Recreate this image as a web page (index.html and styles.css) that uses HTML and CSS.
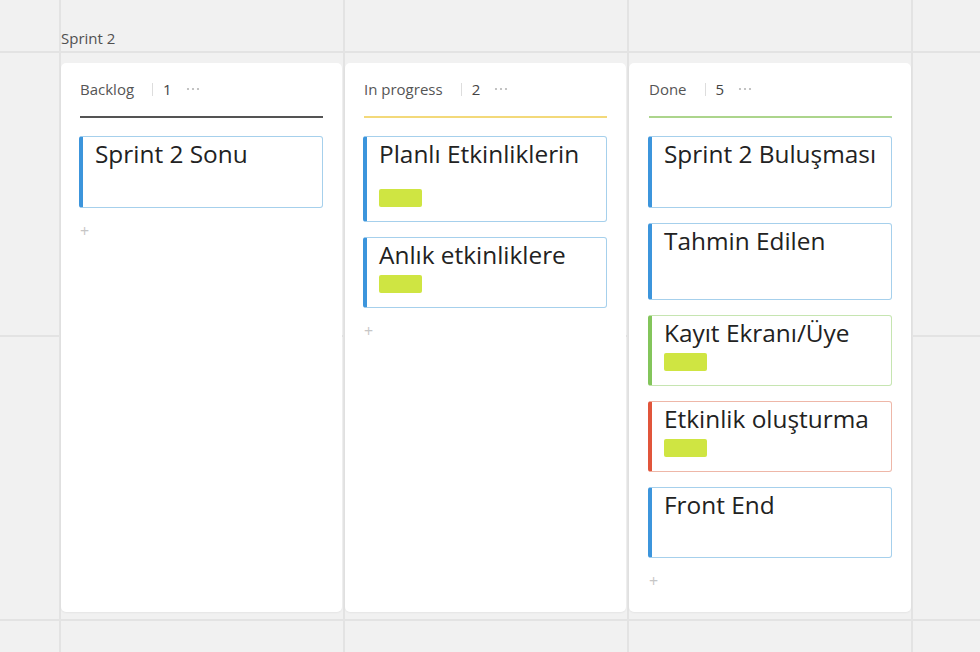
FILE: index.html
```html
<!DOCTYPE html>
<html lang="tr">
<head>
<meta charset="utf-8">
<title>Sprint 2</title>
<link rel="stylesheet" href="styles.css">
</head>
<body>
<div class="board">
  <div class="board-title">Sprint 2</div>
  <div class="columns">
    <section class="column">
      <header class="col-head">
        <span class="col-name">Backlog</span>
        <span class="col-sep"></span>
        <span class="col-count">1</span>
        <svg class="col-more" width="14" height="4" viewBox="0 0 14 4"><circle cx="2" cy="2" r="1.1"/><circle cx="7" cy="2" r="1.1"/><circle cx="12" cy="2" r="1.1"/></svg>
      </header>
      <div class="col-line line-dark"></div>
      <div class="cards">
        <div class="card card-blue card-h72"><div class="card-title">Sprint 2 Sonu</div></div>
      </div>
      <div class="add">+</div>
    </section>

    <section class="column">
      <header class="col-head">
        <span class="col-name">In progress</span>
        <span class="col-sep"></span>
        <span class="col-count">2</span>
        <svg class="col-more" width="14" height="4" viewBox="0 0 14 4"><circle cx="2" cy="2" r="1.1"/><circle cx="7" cy="2" r="1.1"/><circle cx="12" cy="2" r="1.1"/></svg>
      </header>
      <div class="col-line line-yellow"></div>
      <div class="cards">
        <div class="card card-blue"><div class="card-title">Planlı Etkinliklerin</div><div class="tag tag-low"></div></div>
        <div class="card card-blue"><div class="card-title">Anlık etkinliklere</div><div class="tag"></div></div>
      </div>
      <div class="add">+</div>
    </section>

    <section class="column col-wide">
      <header class="col-head">
        <span class="col-name">Done</span>
        <span class="col-sep"></span>
        <span class="col-count">5</span>
        <svg class="col-more" width="14" height="4" viewBox="0 0 14 4"><circle cx="2" cy="2" r="1.1"/><circle cx="7" cy="2" r="1.1"/><circle cx="12" cy="2" r="1.1"/></svg>
      </header>
      <div class="col-line line-green"></div>
      <div class="cards">
        <div class="card card-blue card-h72"><div class="card-title">Sprint 2 Buluşması</div></div>
        <div class="card card-blue card-h77"><div class="card-title">Tahmin Edilen</div></div>
        <div class="card card-green"><div class="card-title">Kayıt Ekranı/Üye</div><div class="tag"></div></div>
        <div class="card card-red"><div class="card-title">Etkinlik oluşturma</div><div class="tag"></div></div>
        <div class="card card-blue"><div class="card-title">Front End</div></div>
      </div>
      <div class="add">+</div>
    </section>
  </div>
</div>
</body>
</html>
```

FILE: styles.css
```css
* { box-sizing: border-box; }

html, body {
  margin: 0;
  height: 100%;
}

body {
  font-family: "Open Sans", "Noto Sans", sans-serif;
  background-color: #f1f1f1;
  background-image:
    linear-gradient(to right, #e3e3e3 2px, transparent 2px),
    linear-gradient(to bottom, #e3e3e3 2px, transparent 2px);
  background-size: 284px 284px;
  background-position: 59px 51px;
  overflow: hidden;
}

.board {
  padding: 28px 0 0 61px;
}

.board-title {
  font-size: 15px;
  line-height: 20px;
  color: #505050;
}

.columns {
  display: flex;
  gap: 3px;
  margin-top: 15px;
}

.column {
  width: 281px;
  height: 549px;
  background: #ffffff;
  border-radius: 5px;
  box-shadow: 0 1px 2px rgba(0, 0, 0, 0.05);
  padding: 17px 19px 0 18px;
}

.col-wide {
  width: 282px;
  padding-left: 19px;
}

.col-head {
  display: flex;
  align-items: center;
  height: 18px;
  padding-left: 1px;
  font-size: 15px;
  line-height: 18px;
}

.col-name {
  color: #555555;
}

.col-sep {
  width: 1px;
  height: 13px;
  background: #dddddd;
  margin: 0 10px 0 18px;
}

.col-count {
  color: #444444;
}

.col-more {
  fill: #b5b5b5;
  margin-left: 14px;
}

.col-line {
  height: 2px;
  margin-top: 18px;
  margin-left: 1px;
}

.line-dark { background: #545454; }
.line-yellow { background: #f3d97a; }
.line-green { background: #acd58c; }

.cards {
  display: flex;
  flex-direction: column;
  gap: 15px;
  margin-top: 18px;
}

.card {
  min-height: 71px;
  border: 1px solid #a6d0ec;
  border-left-width: 4px;
  border-radius: 3px;
  padding: 2px 8px 14px 12px;
  background: #ffffff;
}

.card-blue { border-color: #a6d0ec; border-left-color: #3c95dc; }
.card-green { border-color: #c6e5b1; border-left-color: #83c55b; }
.card-red { border-color: #eeb7a8; border-left-color: #e1553b; }

.card-h72 { min-height: 72px; }
.card-h77 { min-height: 77px; }

.card-title {
  font-size: 24.4px;
  line-height: 29px;
  color: #222222;
  white-space: nowrap;
}

.tag {
  width: 43px;
  height: 18px;
  margin-top: 6px;
  border-radius: 2px;
  background: #cfe542;
}

.tag-low { margin-top: 21px; }

.add {
  margin-top: 13px;
  padding-left: 1px;
  font-size: 16px;
  line-height: 20px;
  color: #c6c6c6;
}
```
